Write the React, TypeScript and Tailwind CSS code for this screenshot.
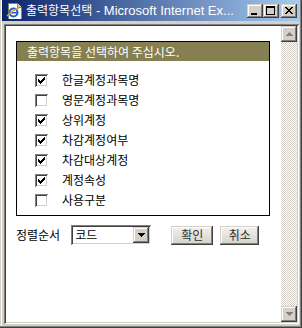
import React from "react";

const raised =
  "shadow-[inset_-1px_-1px_0_#404040,inset_1px_1px_0_#d4d0c8,inset_-2px_-2px_0_#808080,inset_2px_2px_0_#fff]";
const sunken =
  "shadow-[inset_1px_1px_0_#808080,inset_-1px_-1px_0_#fff,inset_2px_2px_0_#404040,inset_-2px_-2px_0_#d4d0c8]";

const CheckMark = () => (
  <svg className="absolute left-[3px] top-[3px]" width="7" height="7" viewBox="0 0 7 7" shapeRendering="crispEdges">
    <rect x="6" y="0" width="1" height="1" fill="#000" />
    <rect x="5" y="1" width="2" height="1" fill="#000" />
    <rect x="0" y="2" width="1" height="1" fill="#000" />
    <rect x="4" y="2" width="3" height="1" fill="#000" />
    <rect x="0" y="3" width="2" height="1" fill="#000" />
    <rect x="3" y="3" width="3" height="1" fill="#000" />
    <rect x="0" y="4" width="5" height="1" fill="#000" />
    <rect x="1" y="5" width="3" height="1" fill="#000" />
    <rect x="2" y="6" width="1" height="1" fill="#000" />
  </svg>
);

const Check = ({ checked }: { checked: boolean }) => (
  <span className={`relative block w-[13px] h-[13px] bg-white shrink-0 ${sunken}`}>
    {checked && <CheckMark />}
  </span>
);

const items: [string, boolean][] = [
  ["한글계정과목명", true],
  ["영문계정과목명", false],
  ["상위계정", true],
  ["차감계정여부", true],
  ["차감대상계정", true],
  ["계정속성", true],
  ["사용구분", false],
];

const IeIcon = () => (
  <svg width="16" height="16" viewBox="0 0 16 16" shapeRendering="crispEdges">
    <path d="M2 0h9l4 4v12H2z" fill="#fff" stroke="#808080" strokeWidth="1" />
    <path d="M11 0v4h4" fill="#d4d0c8" stroke="#808080" strokeWidth="1" />
    <g shapeRendering="auto">
      <circle cx="7.5" cy="9.5" r="4" fill="none" stroke="#1c5fd0" strokeWidth="2" />
      <rect x="4" y="9" width="7" height="1.5" fill="#1c5fd0" />
      <path d="M1 13 C4 10 9 6 13 5" stroke="#e8a020" strokeWidth="1.4" fill="none" />
    </g>
  </svg>
);

const CapBtn = ({ children }: { children: React.ReactNode }) => (
  <span className={`relative flex w-[16px] h-[14px] bg-[#d4d0c8] ${raised}`}>{children}</span>
);

const Arrow = ({ down }: { down?: boolean }) => (
  <svg width="7" height="4" viewBox="0 0 7 4" shapeRendering="crispEdges" className={down ? "" : "rotate-180"}>
    <path d="M0 0h7v1h-1v1h-1v1h-1v1h-1v-1h-1v-1h-1v-1h-1z" fill="currentColor" />
  </svg>
);

export default function App() {
  return (
    <div
      className="w-[302px] h-[328px] bg-[#d4d0c8] flex flex-col overflow-hidden shadow-[inset_-1px_-1px_0_#404040,inset_-2px_-2px_0_#808080,inset_1px_0_0_#d4d0c8,inset_2px_0_0_#fff]"
      style={{ fontFamily: '"Noto Sans CJK KR", "Liberation Sans", sans-serif' }}
    >
      {/* Title bar */}
      <div className="mx-[2px] h-[21px] flex items-center bg-[linear-gradient(90deg,#0a246a,#a6caf0)] pl-[4px] pr-[3px] shrink-0">
        <IeIcon />
        <span className="ml-[4px] text-white text-[12px] leading-[16px] whitespace-nowrap">
          출력항목선택
          <span className="text-[13px]" style={{ fontFamily: '"Liberation Sans", sans-serif' }}>
            {" "}- Microsoft Internet Ex...
          </span>
        </span>
        <div className="flex-1" />
        <div className="flex items-center">
          <CapBtn>
            <span className="absolute left-[4px] top-[9px] w-[6px] h-[2px] bg-black" />
          </CapBtn>
          <CapBtn>
            <span className="absolute left-[3px] top-[2px] w-[9px] h-[9px] border border-black border-t-2" />
          </CapBtn>
          <span className="w-[2px]" />
          <CapBtn>
            <svg className="absolute left-[4px] top-[3px]" width="8" height="7" viewBox="0 0 8 7" shapeRendering="crispEdges">
              <path d="M0 0h2v1h1v1h2V1h1V0h2v1H7v1H6v1H5v1h1v1h1v1h1v1H6V6H5V5H3v1H2v1H0V6h1V5h1V4h1V3H2V2H1V1H0z" fill="#000" />
            </svg>
          </CapBtn>
        </div>
      </div>

      {/* Content area */}
      <div className={`ml-[4px] mr-[3px] mt-[3px] h-[300px] p-[2px] flex ${sunken}`}>
        <div className="flex-1 bg-white flex flex-col pl-[10px] pt-[15px]">
          {/* Panel */}
          <div className="w-[254px] h-[175px] border border-black flex flex-col">
            <div className="h-[19px] bg-[#857f52] text-white text-[12px] leading-[19px] pl-[10px] whitespace-nowrap">
              출력항목을 선택하여 주십시오.
            </div>
            <div className="flex flex-col pt-[9px] pl-[18px]">
              {items.map(([label, checked]) => (
                <div key={label} className="h-[20px] flex items-center">
                  <Check checked={checked} />
                  <span className="ml-[14px] text-[12px] leading-[14px] text-black whitespace-nowrap">{label}</span>
                </div>
              ))}
            </div>
          </div>

          {/* Bottom row */}
          <div className="mt-[9px] flex items-center h-[20px]">
            <span className="text-[12px] leading-[14px] text-black whitespace-nowrap">정렬순서</span>
            <div className={`ml-[11px] w-[80px] h-[20px] bg-white p-[2px] flex items-center ${sunken}`}>
              <span className="flex-1 pl-[2px] text-[12px] leading-[14px] text-black">코드</span>
              <span className={`w-[16px] h-[16px] bg-[#d4d0c8] flex items-center justify-center text-black ${raised}`}>
                <Arrow down />
              </span>
            </div>
            <button
              className={`ml-[20px] w-[42px] h-[19px] bg-[linear-gradient(#f4f3ee,#d4d0c8)] text-[12px] leading-[14px] text-[#303030] flex items-center justify-center ${raised}`}
            >
              확인
            </button>
            <button
              className={`ml-[7px] w-[39px] h-[19px] bg-[linear-gradient(#f4f3ee,#d4d0c8)] text-[12px] leading-[14px] text-[#303030] flex items-center justify-center ${raised}`}
            >
              취소
            </button>
          </div>
        </div>

        {/* Scrollbar */}
        <div className="w-[16px] flex flex-col bg-[repeating-conic-gradient(#d4d0c8_0_25%,#ffffff_0_50%)] bg-[length:2px_2px]">
          <span className={`w-[16px] h-[16px] bg-[#d4d0c8] flex items-center justify-center text-[#808080] ${raised}`}>
            <Arrow />
          </span>
          <div className="flex-1" />
          <span className={`w-[16px] h-[16px] bg-[#d4d0c8] flex items-center justify-center text-[#808080] ${raised}`}>
            <Arrow down />
          </span>
        </div>
      </div>
    </div>
  );
}
